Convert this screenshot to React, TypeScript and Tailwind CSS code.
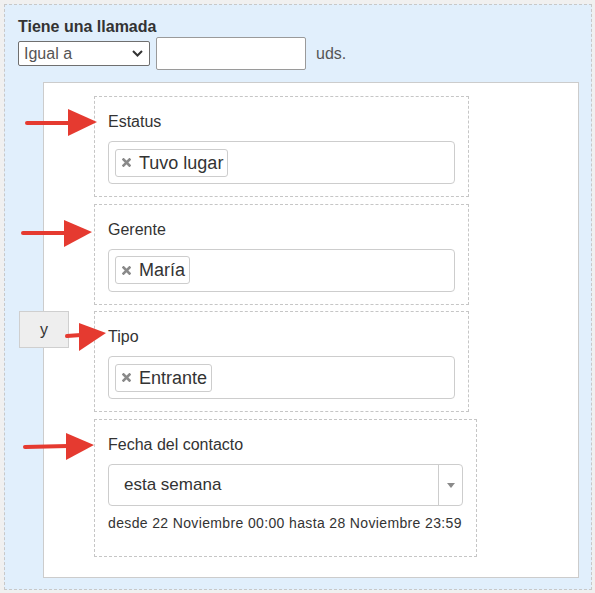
import React from 'react';

const TagField = ({ label, tag }: { label: string; tag: string }) => (
  <div className="w-[375px] h-[101px] border border-dashed border-[#c6c6c6] px-[13px] pt-[15px]">
    <div className="text-[16px] leading-[20px] text-[#333]">{label}</div>
    <div className="mt-[9px] h-[43px] rounded-[4px] border border-[#cdcdcd] bg-white flex items-center pl-[6px]">
      <div className="h-[28px] flex items-center rounded-[3px] border border-[#cdcdcd] bg-white pl-[6px] pr-[4px]">
        <svg width="9" height="9" viewBox="0 0 9 9" className="mr-[8px]">
          <path d="M1.5 1.5 L7.5 7.5 M7.5 1.5 L1.5 7.5" stroke="#8a8a8a" strokeWidth="2.6" strokeLinecap="square" />
        </svg>
        <span className="text-[18px] leading-[22px] text-[#333]">{tag}</span>
      </div>
    </div>
  </div>
);

const Arrow = ({ line, head }: { line: string; head: string }) => (
  <g>
    <path d={line} stroke="#e53a30" strokeWidth="4" strokeLinecap="round" fill="none" />
    <polygon points={head} fill="#e53a30" />
  </g>
);

const App = () => {
  return (
    <div
      className="relative w-[595px] h-[593px] bg-[#f0f0f0] overflow-hidden"
      style={{ fontFamily: '"Liberation Sans", Arial, sans-serif' }}
    >
      <div className="absolute left-[4px] top-[4px] w-[588px] h-[586px] border border-dashed border-[#c8c8c8] bg-[#e1effc] pl-[13px] pt-[12px]">
        <div className="text-[16px] leading-[20px] font-bold text-[#333]">Tiene una llamada</div>
        <div className="flex items-center h-[33px]">
          <div className="w-[132px] h-[25px] border border-[#6f6f6f] rounded-[2px] bg-white flex items-center justify-between pl-[5px] pr-[6px]">
            <span className="text-[16px] leading-[20px] text-[#555]">Igual a</span>
            <svg width="11" height="7" viewBox="0 0 11 7">
              <path d="M1 1 L5.5 5.5 L10 1" stroke="#333" strokeWidth="2" fill="none" />
            </svg>
          </div>
          <div className="ml-[6px] w-[150px] h-[33px] border border-[#9a9a9a] rounded-[2px] bg-white" />
          <span className="ml-[10px] text-[16px] leading-[20px] text-[#555]">uds.</span>
        </div>

        <div className="mt-[12px] ml-[25px] w-[536px] h-[496px] border border-[#cccccc] bg-white pl-[50px] pt-[13px] flex flex-col gap-[6.7px]">
          <TagField label="Estatus" tag="Tuvo lugar" />
          <TagField label="Gerente" tag="María" />
          <TagField label="Tipo" tag="Entrante" />
          <div className="w-[383px] h-[138px] border border-dashed border-[#c6c6c6] px-[13px] pt-[15px]">
            <div className="text-[16px] leading-[20px] text-[#333]">Fecha del contacto</div>
            <div className="mt-[9px] h-[42px] rounded-[4px] border border-[#cdcdcd] bg-white flex items-stretch">
              <div className="flex-1 flex items-center pl-[15px] text-[17px] text-[#333]">esta semana</div>
              <div className="w-[24px] border-l border-[#cdcdcd] flex items-center justify-center">
                <svg width="8" height="5" viewBox="0 0 8 5">
                  <polygon points="0,0 8,0 4,5" fill="#8a8a8a" />
                </svg>
              </div>
            </div>
            <div className="mt-[7px] text-[14px] leading-[20px] tracking-[0.36px] text-[#333] whitespace-nowrap">
              desde 22 Noviembre 00:00 hasta 28 Noviembre 23:59
            </div>
          </div>
        </div>

        <div className="absolute left-[14px] top-[306px] w-[50px] h-[37px] border border-[#cfcfcf] bg-[#eeeeee] flex items-center justify-center text-[16px] text-[#333]">
          y
        </div>
      </div>

      <svg className="absolute left-0 top-0 pointer-events-none" width="595" height="593">
        <Arrow line="M27 123 L70 123" head="68,109 97,122 68,136" />
        <Arrow line="M23 233 L66 233" head="64,220 92,232 64,247" />
        <Arrow line="M67 336 L81 335" head="79,323 106,333 79,351" />
        <Arrow line="M25 447 L68 446" head="66,433 94,445 66,460" />
      </svg>
    </div>
  );
};

export default App;
